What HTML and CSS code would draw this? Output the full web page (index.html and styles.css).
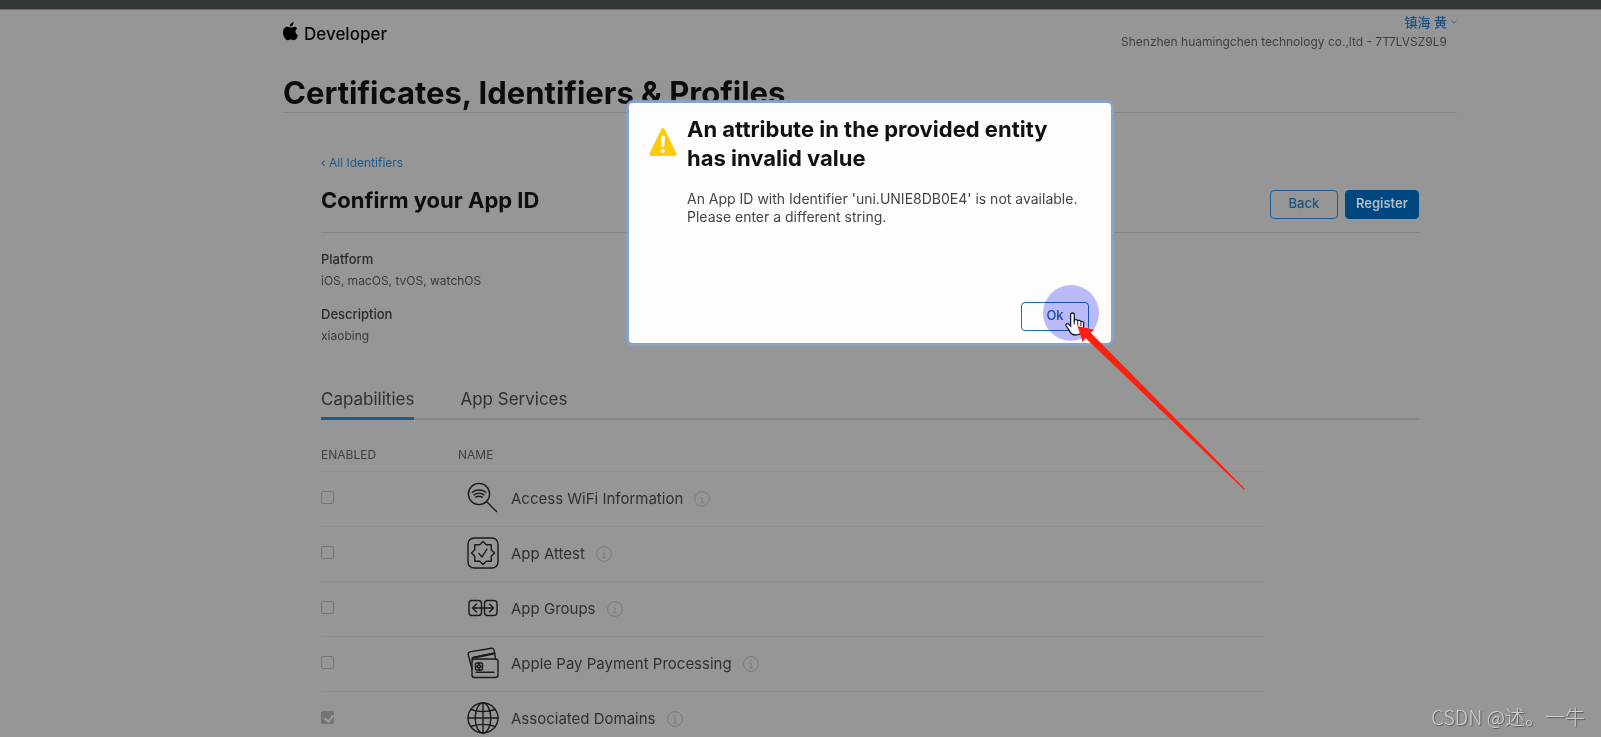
FILE: index.html
```html
<!DOCTYPE html>
<html lang="en">
<head>
<meta charset="utf-8">
<title>Certificates, Identifiers &amp; Profiles</title>
<link rel="stylesheet" href="styles.css">
</head>
<body>
<svg class="sprite" aria-hidden="true">
  <symbol id="info" viewBox="0 0 16 16"><circle cx="8" cy="8" r="7.4" fill="none" stroke="currentColor"/><path d="M6.4 7h1.8v4.6M6 11.8h4.2M8 4v1.2" fill="none" stroke="currentColor"/></symbol>
</svg>
<div class="chrome"></div>
<div class="page">
  <header class="header">
    <a class="brand" href="#"><svg class="brand-logo" viewBox="0 0 15 19"><path d="M10.600 0c.2 1.300-.4 2.500-1.100 3.300-.8.900-1.800 1.400-2.700 1.300-.2-1.200.4-2.400 1.100-3.200C8.600.6 9.700.1 10.600 0zM14.300 6.300c-2.700 1.700-2.200 5.700.7 6.900-.7 2-2.300 5-4 5-1.200 0-1.700-.7-3.100-.7s-1.900.7-3.100.7C2.600 18.200 0 14.300 0 10.600 0 6.800 2.300 4.800 4.500 4.800c1.400 0 2.300.9 3.300.9s2-.9 3.700-.9c1.100 0 2.200.6 2.800 1.500z"/></svg><span>Developer</span></a>
    <div class="account">
      <button class="account-name" type="button"><span>镇海 黄</span><svg class="chevron" viewBox="0 0 6 4"><path d="M.5.7 3 3 5.500.7" fill="none" stroke="currentColor"/></svg></button>
      <p class="team">Shenzhen huamingchen technology co.,ltd - 7T7LVSZ9L9</p>
    </div>
  </header>
  <h1 class="title">Certificates, Identifiers &amp; Profiles</h1>
  <main class="content">
    <a class="crumb" href="#">‹ All Identifiers</a>
    <div class="toolbar">
      <h2 class="subtitle">Confirm your App ID</h2>
      <div class="actions">
        <button class="btn" type="button">Back</button>
        <button class="btn btn-primary" type="button">Register</button>
      </div>
    </div>
    <dl class="details">
      <dt>Platform</dt><dd>iOS, macOS, tvOS, watchOS</dd>
      <dt>Description</dt><dd>xiaobing</dd>
    </dl>
    <nav class="tabs">
      <a class="tab tab-active" href="#">Capabilities</a>
      <a class="tab" href="#">App Services</a>
    </nav>
    <table class="caps">
      <thead><tr><th class="col-enabled">ENABLED</th><th>NAME</th></tr></thead>
      <tbody>
        <tr><td><input class="check" type="checkbox" id="c1" disabled></td><td><div class="cap">
          <svg class="icon" viewBox="0 0 32 32"><circle cx="12" cy="12" r="10.600"/><path d="m20 20 9.500 9.500"/><path d="M5.200 10.200c4-3 9.600-3 13.600 0M7 12.800c3-2 7-2 10 0M8.700 15.200c2-1.200 4.600-1.200 6.600 0"/></svg>
          <label for="c1">Access WiFi Information</label><svg class="info"><use href="#info"/></svg></div></td></tr>
        <tr><td><input class="check" type="checkbox" id="c2" disabled></td><td><div class="cap">
          <svg class="icon" viewBox="0 0 32 32"><rect x="1" y="1" width="30" height="30" rx="6"/><path d="M16 4.500 19.300 7.800H24.200V12.700L27.500 16 24.200 19.300V24.200H19.300L16 27.500 12.700 24.200H7.800V19.300L4.500 16 7.800 12.700V7.800H12.700Z"/><path d="m12 16.500 3 3.500 5-8"/></svg>
          <label for="c2">App Attest</label><svg class="info"><use href="#info"/></svg></div></td></tr>
        <tr><td><input class="check" type="checkbox" id="c3" disabled></td><td><div class="cap">
          <svg class="icon" viewBox="0 0 32 32"><rect x="2" y="8.500" width="12.500" height="15" rx="3"/><rect x="17.500" y="8.500" width="12.500" height="15" rx="3"/><path d="M5.500 16h21M9.500 12l-4 4 4 4M22.500 12l4 4-4 4"/></svg>
          <label for="c3">App Groups</label><svg class="info"><use href="#info"/></svg></div></td></tr>
        <tr><td><input class="check" type="checkbox" id="c4" disabled></td><td><div class="cap">
          <svg class="icon" viewBox="0 0 32 32"><rect x="5" y="12" width="26" height="18.500" rx="2.500"/><path d="M5 22 1.200 7.500c-.3-1.300.3-2.300 1.600-2.600L24.500 1.200c1.300-.2 2.200.4 2.500 1.600L28.600 12M5 12.500l.5-1.800L27.500 6"/><path d="m7 10.500 20.500-4" stroke-width="2.200"/><rect x="8.500" y="16" width="7" height="7" rx="1"/><path d="M12 16v2m0 3v2m-3.500-3.500h2m3 0h2M9 25.300h18"/><circle cx="12" cy="19.500" r="1.500"/></svg>
          <label for="c4">Apple Pay Payment Processing</label><svg class="info"><use href="#info"/></svg></div></td></tr>
        <tr><td><input class="check" type="checkbox" id="c5" checked disabled></td><td><div class="cap">
          <svg class="icon" viewBox="0 0 32 32"><circle cx="16" cy="16" r="15"/><ellipse cx="16" cy="16" rx="7.800" ry="15"/><path d="M16 1v30M1 16h30M4 7.500c7 2.800 17 2.800 24 0M4 24.500c7-2.800 17-2.800 24 0"/></svg>
          <label for="c5">Associated Domains</label><svg class="info"><use href="#info"/></svg></div></td></tr>
      </tbody>
    </table>
  </main>
  <div class="modal" role="alertdialog" aria-labelledby="alert-title">
    <svg class="warning" viewBox="0 0 28 28"><path d="M12.300 1.200c.8-1.500 2.600-1.500 3.400 0l11.600 24c.7 1.500-.1 2.800-1.700 2.800H2.400C.8 28 0 26.700.7 25.200z" fill="#fdcb08"/><path d="M14 7.500c1.300 0 2 .9 1.900 2.200l-.7 9.300h-2.400l-.7-9.300c-.1-1.300.6-2.200 1.900-2.200z" fill="#fff"/><circle cx="14" cy="23" r="2" fill="#fff"/></svg>
    <div class="modal-text">
      <h2 class="modal-title" id="alert-title">An attribute in the provided entity has invalid value</h2>
      <p class="modal-body">An App ID with Identifier 'uni.UNIE8DB0E4' is not available. Please enter a different string.</p>
    </div>
    <button class="btn btn-ok" type="button">Ok</button>
    <span class="halo"></span>
    <svg class="pointer" viewBox="0 0 184 186" aria-hidden="true">
      <path d="M11.500 1c1.200 0 1.800.8 1.800 1.900v5.400c.6-1 3-.9 3.400.5.800-.9 2.900-.6 3.200.9.900-.7 2.800-.2 2.900 1.300.1 4.500-.5 6.200-1.800 8.800-1.200 2.600-3.200 3.200-6.500 3.200-3.500 0-5-1.700-6.300-4.400-1-2-2.500-3.600-3.200-5.200-.6-1.500 1.300-2.500 2.600-1.300l2 2V2.900C9.600 1.800 10.300 1 11.500 1z" fill="#fff" stroke="#16163a" stroke-width="1.300"/>
      <path d="M13.300 8v4.500M16.700 9.500v4M19.900 10.500v3.500" stroke="#16163a" fill="none"/>
      <path d="M16.500 14 33.500 17.700 29.500 20.500 184 177 183 177.700 24.500 26 21.700 30.200Z" fill="#ff2010"/>
    </svg>
  </div>
  <p class="watermark">CSDN @述。一牛</p>
</div>
</body>
</html>
```

FILE: styles.css
```css
* { box-sizing: border-box; }
body {
  margin: 0;
  height: 100vh;
  overflow: hidden;
  display: flex;
  flex-direction: column;
  background: #969696;
  color: #303030;
  font-family: Inter, "Noto Sans CJK SC", sans-serif;
  font-size: 13px;
}
h1, h2, p, dl, dd { margin: 0; }
a { color: inherit; text-decoration: none; }
button, input { font: inherit; }
.sprite { display: none; }
.chrome { flex: none; height: 10px; background: #333637; border-bottom: 1px solid #6a6e6d; }
.page { position: relative; flex: 1; min-height: 0; padding: 0 9% 0 283px; overflow: hidden; }
.header { display: flex; justify-content: space-between; height: 51px; }
.brand { display: flex; align-items: center; gap: 6px; height: 47px; font-size: 17px; font-weight: 500; color: #080808; }
.brand-logo { width: 15px; height: 19px; margin-bottom: 5px; }
.account { padding-top: 2px; text-align: right; line-height: 20px; }
.account-name { display: inline-flex; align-items: center; gap: 4px; padding: 0; border: 0; background: none; color: #1c5080; font-weight: 500; line-height: 20px; }
.chevron { width: 6px; height: 4px; color: #3c6488; }
.team { padding-right: 10px; font-size: 12px; color: #404040; }
.title { height: 52px; border-bottom: 1px solid #868686; font-size: 31px; font-weight: 650; line-height: 63px; color: #0c0c0c; white-space: nowrap; }
.content { padding: 40px 38px 0 38px; }
.crumb { display: block; font-size: 12px; line-height: 20px; color: #1c5a8a; }
.toolbar { display: flex; justify-content: space-between; align-items: flex-start; height: 60px; padding-top: 17px; border-bottom: 1px solid #848484; }
.subtitle { font-size: 22px; font-weight: 650; line-height: 20px; color: #0e0e0e; }
.actions { display: flex; gap: 7px; }
.btn { height: 29px; width: 68px; padding: 0 0 3px; border: 1px solid #1c5c94; border-radius: 4px; background: none; color: #1c5080; font-weight: 500; }
.btn-primary { width: 74px; border-color: #004680; background: #004680; color: #b4bcc4; font-weight: 600; }
.details { padding-top: 15px; line-height: 22px; }
.details dt { font-weight: 500; color: #2a2a2a; }
.details dd { margin-bottom: 11px; font-size: 12px; color: #3a3a3a; }
.tabs { display: flex; gap: 46px; margin-top: 28px; height: 45px; border-bottom: 2px solid #868686; }
.tab { height: 45px; font-size: 17px; line-height: 48px; }
.tab-active { border-bottom: 3px solid #1c5a94; }
.caps { width: 86%; border-collapse: collapse; }
.caps th { height: 51px; padding: 18px 0 0; text-align: left; font-weight: 400; font-size: 12px; color: #404040; }
.caps td { height: 55px; padding: 0; border-top: 1px solid #8f8f8f; }
.col-enabled { width: 137px; }
.check { appearance: none; display: block; width: 13px; height: 13px; margin: 0 0 3px; border: 1px solid #777; border-radius: 2px; }
.check:checked { border-color: #747474; background: #747474; position: relative; }
.check:checked::after { content: ""; position: absolute; left: 4px; top: 1px; width: 4px; height: 7px; border: solid #a0a0a0; border-width: 0 2px 2px 0; transform: rotate(40deg); }
.cap { display: flex; align-items: center; padding: 0 0 1px 9px; font-size: 15px; }
.icon { width: 32px; height: 32px; margin-right: 12px; fill: none; stroke: #1a1a1a; stroke-width: 1.4; stroke-linecap: round; stroke-linejoin: round; }
.info { width: 16px; height: 16px; margin: 2px 0 0 11px; color: #7c7c7c; }
.modal {
  position: absolute; top: 93px; left: 629px; width: 482px; height: 240px;
  display: grid; grid-template-columns: 28px 1fr; column-gap: 10px; align-items: start;
  padding: 12px 22px 12px 20px; border-radius: 4px; background: #fdfdfd; box-shadow: 0 0 1px 3px #87a3c9;
}
.warning { width: 28px; height: 28px; margin-top: 13px; }
.modal-title { padding-right: 28px; font-size: 22px; font-weight: 650; line-height: 29px; color: #111; }
.modal-body { margin-top: 17px; font-size: 14px; line-height: 18px; color: #444; }
.btn-ok { grid-column: 2; justify-self: end; align-self: end; border-color: #1270c0; color: #1467b0; }
.halo { position: absolute; left: 414px; top: 182px; width: 56px; height: 56px; border-radius: 50%; background: #bcbcfb; mix-blend-mode: multiply; }
.pointer { position: absolute; left: 432px; top: 209px; width: 184px; height: 186px; overflow: visible; }
.watermark { position: absolute; right: 16px; bottom: 6px; font-family: "Noto Sans CJK SC", sans-serif; font-size: 20px; font-weight: 300; line-height: 28px; color: #d0d0d0; text-shadow: 1px 1px 1px #555; }
```
